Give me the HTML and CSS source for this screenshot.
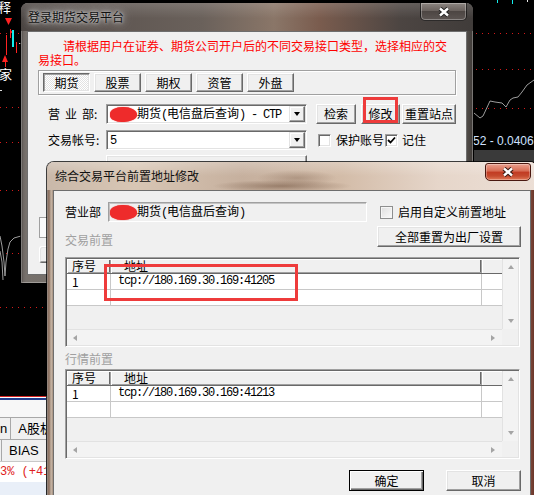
FILE: index.html
```html
<!DOCTYPE html>
<html lang="zh-CN">

<head>
    <meta charset="UTF-8">
    <meta name="viewport" content="width=device-width, initial-scale=1.0">
    <title>综合交易平台前置地址修改</title>
    <link rel="stylesheet" href="styles.css">
</head>

<body>
    <div class="desk">
        <!-- quote chart behind the dialogs -->
        <svg class="chart" width="534" height="495" viewBox="0 0 534 495">
            <g class="grid">
                <line x1="0" y1="33.5" x2="21" y2="33.5" />
                <line x1="0" y1="107.5" x2="21" y2="107.5" />
                <line x1="0" y1="142.5" x2="21" y2="142.5" />
                <line x1="0" y1="190.5" x2="21" y2="190.5" />
                <line x1="0" y1="253.5" x2="21" y2="253.5" />
                <line x1="0" y1="307.5" x2="47" y2="307.5" />
                <line x1="476" y1="33.5" x2="534" y2="33.5" />
                <line x1="476" y1="69.5" x2="534" y2="69.5" />
                <line x1="476" y1="108.5" x2="534" y2="108.5" />
            </g>
            <text class="mark" x="-2" y="12">释</text>
            <polygon points="5,18 12,18 8.5,25" fill="#f22" />
            <line x1="6.5" y1="35" x2="6.5" y2="55" stroke="#f22" />
            <line x1="10.5" y1="29" x2="10.5" y2="38" stroke="#f22" />
            <polygon points="10,30 13,32 10,34" fill="#f22" />
            <line x1="13" y1="30" x2="13" y2="47" stroke="#1ee" stroke-width="2" />
            <line x1="16.5" y1="42" x2="16.5" y2="53" stroke="#f22" />
            <line x1="19" y1="43.5" x2="21" y2="43.5" stroke="#ddd" />
            <polygon points="2,62 8,62 5,55" fill="#f22" />
            <line x1="5.5" y1="62" x2="5.5" y2="67" stroke="#f22" />
            <text class="mark" x="-1" y="79">家</text>
            <line x1="0" y1="90.5" x2="2" y2="90.5" stroke="#ddd" />
            <polyline class="curve" points="0,236 2,246 4,262 5,276 6,262 8,249 10,242 14,238 21,236" />
            <polyline class="curve" points="0,251 2,262 3,280" />
            <line x1="497.5" y1="0" x2="497.5" y2="3" stroke="#1ee" />
            <line x1="512.5" y1="0" x2="512.5" y2="4" stroke="#1ee" />
            <line x1="527.5" y1="0" x2="527.5" y2="2" stroke="#eee" />
            <polyline class="curve" points="474,113 480,118 483,116 490,101 495,102 502,103 506,107 510,100 513,98 518,97 522,92 527,85 534,80" />
            <text class="quote" x="473" y="145">52 - 0.0406</text>
            <rect x="474" y="150" width="60" height="12" fill="#3a3a3a" />
        </svg>

        <!-- lower panel of the quote window -->
        <div class="dock">
            <div class="dock-rule"></div>
            <div class="dock-pad"></div>
            <div class="dock-bar">
                <span class="dock-cell first">n</span>
                <span class="dock-cell">A股机</span>
            </div>
            <div class="dock-bar">
                <span class="dock-cell bias">BIAS</span>
            </div>
            <div class="dock-price">3% (+41</div>
        </div>

        <!-- login dialog (inactive) -->
        <div class="win win1">
            <div class="caption">
                <span class="caption-text">登录期货交易平台</span>
                <span class="close close-dark">
                    <svg width="12" height="10" viewBox="0 0 12 10">
                        <path d="M2 1.5 L10 8.5 M10 1.5 L2 8.5" stroke="#222" stroke-width="4.4" />
                        <path d="M2 1.5 L10 8.5 M10 1.5 L2 8.5" stroke="#fff" stroke-width="2.4" />
                    </svg>
                </span>
            </div>
            <div class="client">
                <p class="notice">请根据用户在证券、期货公司开户后的不同交易接口类型，选择相应的交易接口。</p>
                <div class="tabbar">
                    <span class="btn tab on">期货</span>
                    <span class="btn tab">股票</span>
                    <span class="btn tab">期权</span>
                    <span class="btn tab">资管</span>
                    <span class="btn tab">外盘</span>
                </div>
                <div class="row r1">
                    <span class="lbl"><span class="wide">营业</span>部:</span>
                    <span class="combo">
                        <span class="blot"></span>
                        <span class="combo-text">期货<span class="en">(</span>电信盘后查询<span class="en">) - CTP</span></span>
                        <span class="drop"></span>
                    </span>
                    <span class="btn b-search">检索</span>
                    <span class="btn b-edit">修改</span>
                    <span class="btn b-reset">重置站点</span>
                </div>
                <div class="row r2">
                    <span class="lbl">交易帐号:</span>
                    <span class="combo">
                        <span class="combo-text"><span class="en">5</span></span>
                        <span class="drop"></span>
                    </span>
                    <span class="check classic"></span>
                    <span class="chk-text">保护账号</span>
                    <span class="check classic tick">
                        <svg width="9" height="9" viewBox="0 0 9 9">
                            <path d="M1 4 L3.5 6.5 L8 1.5" fill="none" stroke="#000" stroke-width="1.8" />
                        </svg>
                    </span>
                    <span class="chk-text narrow">记住</span>
                </div>
                <div class="row r3">
                    <span class="btn wide-btn"></span>
                </div>
                <div class="row r4">
                    <span class="ghost-box"></span>
                </div>
                <div class="row r5">
                    <span class="btn ghost-btn">查询</span>
                </div>
            </div>
        </div>

        <!-- front address dialog (active) -->
        <div class="win win2">
            <div class="caption">
                <span class="caption-text">综合交易平台前置地址修改</span>
                <span class="close close-red">
                    <svg width="12" height="10" viewBox="0 0 12 10">
                        <path d="M2 1.5 L10 8.5 M10 1.5 L2 8.5" stroke="#3a1a14" stroke-width="4.4" />
                        <path d="M2 1.5 L10 8.5 M10 1.5 L2 8.5" stroke="#fff" stroke-width="2.4" />
                    </svg>
                </span>
            </div>
            <div class="client">
                <div class="row head">
                    <span class="lbl2">营业部</span>
                    <span class="field">
                        <span class="blot"></span>
                        <span>期货<span class="en">(</span>电信盘后查询<span class="en">)</span></span>
                    </span>
                    <span class="check win7"></span>
                    <span class="chk-text">启用自定义前置地址</span>
                </div>
                <div class="row group-head">
                    <span class="group">交易前置</span>
                    <span class="btn b-factory">全部重置为出厂设置</span>
                </div>
                <div class="list first">
                    <div class="lv">
                        <div class="lv-row lv-head"><span>序号</span><span class="addr">地址</span><span></span></div>
                        <div class="lv-row"><span>1</span><span class="addr en">tcp://180.169.30.169:41205</span><span></span></div>
                        <div class="lv-row"><span></span><span></span><span></span></div>
                    </div>
                    <div class="vscroll"><i class="arr up"></i><i class="arr down"></i></div>
                    <div class="hscroll"><i class="arr left"></i><i class="arr right"></i></div>
                    <div class="corner"></div>
                    <div class="note"></div>
                </div>
                <div class="group g2">行情前置</div>
                <div class="list">
                    <div class="lv">
                        <div class="lv-row lv-head"><span>序号</span><span class="addr">地址</span><span></span></div>
                        <div class="lv-row"><span>1</span><span class="addr en">tcp://180.169.30.169:41213</span><span></span></div>
                        <div class="lv-row"><span></span><span></span><span></span></div>
                    </div>
                    <div class="vscroll"><i class="arr up"></i><i class="arr down"></i></div>
                    <div class="hscroll"><i class="arr left"></i><i class="arr right"></i></div>
                    <div class="corner"></div>
                </div>
                <div class="row foot">
                    <span class="btn b-ok">确定</span>
                    <span class="btn b-cancel">取消</span>
                </div>
            </div>
        </div>
    </div>
</body>

</html>
```

FILE: styles.css
```css
body {
    margin: 0;
    background: #000;
    font-family: "Noto Sans CJK SC", "Liberation Sans", sans-serif;
    font-size: 12px;
    line-height: 14px;
    color: #000;
}

.desk {
    position: relative;
    width: 534px;
    height: 495px;
    overflow: hidden;
    background: #000;
}

/* chart */
.chart {
    position: absolute;
    left: 0;
    top: 0;
    display: block;
}

.chart .grid line {
    stroke: #d41a1a;
    stroke-width: 1;
    stroke-dasharray: 1 5;
}

.chart .mark {
    fill: #fff;
    font-family: "Noto Sans CJK SC", sans-serif;
    font-size: 13px;
}

.chart .curve {
    fill: none;
    stroke: #9c9c9c;
    stroke-width: 1;
}

.chart .quote {
    fill: #cfe0ff;
    font-family: "Liberation Sans", sans-serif;
    font-size: 12px;
}

/* bottom-left panel */
.dock {
    position: absolute;
    left: 0;
    top: 396px;
    width: 46px;
    height: 99px;
    background: #e9eff8;
    border-right: 1px solid #9a9a9a;
    overflow: hidden;
}

.dock-rule {
    height: 1px;
    background: #fff;
    border-top: 1px solid #d42020;
    border-bottom: 2px solid #1e3c8c;
}

.dock-pad {
    height: 17px;
    background: #f7f7f7;
}

.dock-bar {
    display: flex;
    height: 21px;
    border-top: 1px solid #a8a8a8;
    background: #f0f0f0;
    white-space: nowrap;
}

.dock-cell {
    padding: 0 7px;
    line-height: 21px;
    border-right: 1px solid #a8a8a8;
    font-family: "Liberation Sans", "Noto Sans CJK SC", sans-serif;
    font-size: 13px;
}

.dock-cell.first {
    box-sizing: border-box;
    width: 12px;
    padding: 0 3px 0 0;
    text-align: right;
}

.dock-cell.bias {
    margin-left: 1px;
    padding: 0 8px 0 7px;
    border-left: 1px solid #a8a8a8;
}

.dock-price {
    height: 20px;
    padding-left: 0;
    border-top: 1px solid #c8c8c8;
    background: #fff;
    color: #e02020;
    font-family: "Liberation Mono", monospace;
    font-size: 12px;
    line-height: 20px;
    white-space: nowrap;
}

/* glass windows */
.win {
    position: absolute;
    display: flex;
    flex-direction: column;
    box-sizing: border-box;
    padding: 0 6px 8px;
    border-radius: 7px 7px 0 0;
    box-shadow: 0 0 0 1px rgba(0, 0, 0, .75), inset 0 0 0 1px rgba(255, 255, 255, .3);
}

.win1 {
    left: 21px;
    top: 3px;
    width: 452px;
    height: 280px;
    background: linear-gradient(90deg, #3e3a37, #6c6662 2px, #77716c 5px, #6a6460 50%, #5a5450 98%, #3e3a37);
}

.win2 {
    left: 47px;
    top: 162px;
    width: 490px;
    height: 345px;
    background: linear-gradient(90deg, #3e3128 0, #8a6f5f 1px, #9c8474 3px, #cbbbab 4px, #a48e7e 6px, #b89c8c 50%, #7a4436 484px, #5a2a20 100%);
}

.caption {
    display: flex;
    height: 28px;
    margin: 0 -6px;
    padding: 0 6px 0 7px;
    border-radius: 7px 7px 0 0;
}

.win1 .caption {
    background:
        linear-gradient(rgba(255, 255, 255, .14), rgba(255, 255, 255, 0) 55%),
        linear-gradient(90deg, #4a4441 0%, #5b534f 12%, #6a615b 40%, #8a7668 56%, #7a5c4e 66%, #4c4542 84%, #403c3a 100%);
}

.win2 .caption {
    padding-left: 8px;
    background:
        radial-gradient(70px 6px at 235px 24px, rgba(110, 80, 60, .55), rgba(110, 80, 60, 0)),
        radial-gradient(40px 8px at 250px 16px, rgba(120, 90, 70, .35), rgba(120, 90, 70, 0)),
        linear-gradient(rgba(255, 255, 255, .25), rgba(255, 255, 255, 0) 50%),
        linear-gradient(90deg, #c9b8a9 0%, #d8c6b4 18%, #c6b09e 40%, #d3bca8 60%, #e6d6ca 80%, #ecdfd6 100%);
}

.caption-text {
    line-height: 28px;
    color: #111;
    white-space: nowrap;
}

.win1 .caption-text {
    text-shadow: 0 0 3px #d8d8d8, 0 0 7px #c8c8c8, 0 0 11px #b8b8b8;
}

.close {
    display: flex;
    align-items: center;
    justify-content: center;
    box-sizing: border-box;
    width: 47px;
    height: 18px;
    margin-left: auto;
    border: 1px solid rgba(20, 20, 20, .8);
    border-top: 0;
    border-radius: 0 0 5px 5px;
    box-shadow: inset 0 0 0 1px rgba(255, 255, 255, .3);
}

.close-dark {
    background: linear-gradient(#8d8682, #6a625e 45%, #4d4643 50%, #5c5552);
}

.close-red {
    width: 46px;
    margin-top: 1px;
    border-top: 1px solid #4a1810;
    border-color: #4a1810;
    border-radius: 3px 3px 5px 5px;
    background: linear-gradient(#eba08e, #d66a52 45%, #c23a22 50%, #c54a2e 75%, #e27a58);
}

.client {
    flex: 1;
    display: flex;
    flex-direction: column;
    align-items: flex-start;
    background: #f0f0f0;
    border: 1px solid #6e6e6e;
}

/* shared controls */
.row {
    display: flex;
    align-items: center;
}

.btn {
    display: flex;
    align-items: center;
    justify-content: center;
    box-sizing: border-box;
    height: 20px;
    background: #f0f0f0;
    border: 1px solid;
    border-color: #fff #696969 #696969 #fff;
    box-shadow: inset -1px -1px #a0a0a0, inset 1px 1px #e3e3e3;
    white-space: nowrap;
}

.en {
    font-family: "Liberation Mono", monospace;
    letter-spacing: -1.2px;
}

.blot {
    flex: none;
    width: 27px;
    height: 15px;
    border-radius: 48% 52% 50% 45%;
    background: #ee2b2b;
    box-shadow: 0 0 1px #ee2b2b;
}

.check {
    display: flex;
    align-items: center;
    justify-content: center;
    box-sizing: border-box;
    width: 13px;
    height: 13px;
    background: #fff;
}

.check.classic {
    border: 1px solid;
    border-color: #a0a0a0 #fff #fff #a0a0a0;
    box-shadow: inset 1px 1px #696969, inset -1px -1px #e3e3e3;
}

.check.win7 {
    border: 1px solid #8e8f8f;
    background: linear-gradient(135deg, #dedede, #fbfbfb);
    box-shadow: inset 0 0 0 1px #f6f6f6;
}

.chk-text {
    margin-left: 5px;
    white-space: nowrap;
}

/* login dialog */
.notice {
    width: 414px;
    margin: 7px 0 0 10px;
    text-indent: 25px;
    color: #f00;
}

.tabbar {
    display: flex;
    gap: 4px;
    box-sizing: border-box;
    width: 418px;
    height: 25px;
    margin: 3px 0 0 10px;
    padding: 2px 0 0 4px;
    border: 1px solid #a0a0a0;
    box-shadow: inset 1px 1px #fff, 1px 1px #fff;
}

.tab {
    width: 47px;
    height: 19px;
}

.tab.on {
    border-color: #696969 #fff #fff #696969;
    box-shadow: inset 1px 1px #a0a0a0, inset -1px -1px #e3e3e3;
    background: repeating-conic-gradient(#fff 0 25%, #e2e2e2 0 50%) 0 0 / 2px 2px;
}

.r1 {
    margin: 9px 0 0 20px;
}

.r2 {
    margin: 6px 0 0 20px;
}

.lbl {
    width: 58px;
    white-space: nowrap;
}

.wide {
    letter-spacing: 5px;
}

.combo {
    display: flex;
    align-items: center;
    box-sizing: border-box;
    width: 201px;
    height: 20px;
    padding: 1px;
    background: #fff;
    border: 1px solid;
    border-color: #a0a0a0 #fff #fff #a0a0a0;
    box-shadow: inset 1px 1px #696969, inset -1px -1px #e3e3e3;
}

.combo .blot {
    margin-left: 2px;
}

.combo-text {
    margin-left: 2px;
    white-space: nowrap;
}

.combo .blot + .combo-text {
    margin-left: 0;
}

.drop {
    display: flex;
    align-items: center;
    justify-content: center;
    box-sizing: border-box;
    width: 16px;
    height: 16px;
    margin-left: auto;
    background: #f0f0f0;
    border: 1px solid;
    border-color: #e3e3e3 #696969 #696969 #e3e3e3;
    box-shadow: inset -1px -1px #a0a0a0, inset 1px 1px #fff;
}

.drop::before {
    content: "";
    border-left: 3.5px solid transparent;
    border-right: 3.5px solid transparent;
    border-top: 4px solid #000;
}

.b-search {
    width: 40px;
    margin-left: 9px;
}

.b-edit {
    position: relative;
    width: 39px;
    margin-left: 5px;
}

.b-edit::after {
    content: "";
    position: absolute;
    left: 1px;
    top: -8px;
    box-sizing: border-box;
    width: 35px;
    height: 26px;
    border: 3px solid #ee3b3b;
}

.b-reset {
    width: 54px;
    margin-left: 2px;
}

.r2 .check {
    margin-left: 11px;
}

.r2 .tick {
    margin-left: 1px;
}

.chk-text.narrow {
    margin-left: 4px;
}

.r3 {
    margin: 5px 0 0 78px;
}

.wide-btn {
    width: 201px;
}

.r4 {
    margin: 42px 0 0 11px;
}

.ghost-box {
    width: 40px;
    height: 21px;
    box-sizing: border-box;
    border: 1px solid #a0a0a0;
    background: #fafafa;
}

.r5 {
    margin: 8px 0 0 11px;
}

.ghost-btn {
    width: 50px;
    height: 17px;
    border-radius: 3px;
    color: #e02020;
}

/* front address dialog */
.head {
    margin: 11px 0 0 11px;
}

.lbl2 {
    width: 36px;
}

.field {
    display: flex;
    align-items: center;
    box-sizing: border-box;
    width: 259px;
    height: 20px;
    margin-left: 7px;
    padding: 1px;
    border: 1px solid;
    border-color: #a0a0a0 #fff #fff #a0a0a0;
    box-shadow: inset 1px 1px #c4c4c4;
    white-space: nowrap;
}

.head .check {
    margin-left: 13px;
}

.group-head {
    align-self: stretch;
    align-items: flex-end;
    margin: 4px 9px 0 11px;
}

.group {
    color: #a0a0a0;
}

.b-factory {
    width: 144px;
    height: 21px;
    margin-left: auto;
}

.list {
    position: relative;
    display: grid;
    grid-template-columns: 435px 16px;
    grid-template-rows: 70px 16px;
    box-sizing: border-box;
    width: 455px;
    height: 90px;
    margin: 10px 0 0 11px;
    padding: 1px;
    background: #f0f0f0;
    border: 1px solid;
    border-color: #a0a0a0 #fff #fff #a0a0a0;
    box-shadow: inset 1px 1px #696969, inset -1px -1px #e3e3e3;
}

.g2 {
    margin: 5px 0 0 11px;
}

.g2 + .list {
    margin-top: 3px;
}

.lv {
    overflow: hidden;
}

.lv-row {
    display: grid;
    grid-template-columns: 44px 371px 20px;
    height: 16px;
    background: #fff;
}

.lv-row span {
    box-sizing: border-box;
    padding-left: 5px;
    line-height: 15px;
    border-right: 1px solid #c8c8c8;
    border-bottom: 1px solid #c8c8c8;
    white-space: nowrap;
    overflow: hidden;
}

.lv-row span:last-child {
    border-right: 0;
}

.lv-row .addr {
    padding-left: 7px;
}

.lv-head {
    height: 15px;
    background: #f0f0f0;
}

.lv-head span {
    line-height: 14px;
    border-right: 0;
    border-bottom: 1px solid #696969;
    box-shadow: inset 1px 1px #fff, inset -1px -1px #a0a0a0, inset -2px 0 #696969;
}

.lv-head .addr {
    padding-left: 13px;
}

.lv-head span:last-child {
    box-shadow: inset 1px 1px #fff;
}

.vscroll {
    display: flex;
    flex-direction: column;
    justify-content: space-between;
    align-items: center;
    box-sizing: border-box;
    padding: 6px 0;
    background: #f3f3f3;
    border-left: 1px solid #e2e2e2;
}

.hscroll {
    display: flex;
    justify-content: space-between;
    align-items: center;
    box-sizing: border-box;
    padding: 0 7px 0 6px;
    background: #f3f3f3;
    border-top: 1px solid #e2e2e2;
}

.corner {
    background: #f0f0f0;
}

.arr {
    width: 0;
    height: 0;
}

.arr.up {
    border-left: 3.5px solid transparent;
    border-right: 3.5px solid transparent;
    border-bottom: 4px solid #a4a4a4;
}

.arr.down {
    border-left: 3.5px solid transparent;
    border-right: 3.5px solid transparent;
    border-top: 4px solid #a4a4a4;
}

.arr.left {
    border-top: 3.5px solid transparent;
    border-bottom: 3.5px solid transparent;
    border-right: 4px solid #a4a4a4;
}

.arr.right {
    border-top: 3.5px solid transparent;
    border-bottom: 3.5px solid transparent;
    border-left: 4px solid #a4a4a4;
}

/* red annotation round the trade address */
.note {
    position: absolute;
    left: 38px;
    top: 6px;
    box-sizing: border-box;
    width: 194px;
    height: 37px;
    border: 3px solid #ee3b3b;
}

.foot {
    align-self: stretch;
    justify-content: flex-end;
    gap: 22px;
    margin-top: 11px;
    padding-right: 9px;
}

.foot .btn {
    width: 75px;
    height: 21px;
}

.b-ok {
    width: 74px;
    border-color: #000;
    box-shadow: inset 1px 1px #fff, inset -1px -1px #696969, inset -2px -2px #a0a0a0;
}
```
